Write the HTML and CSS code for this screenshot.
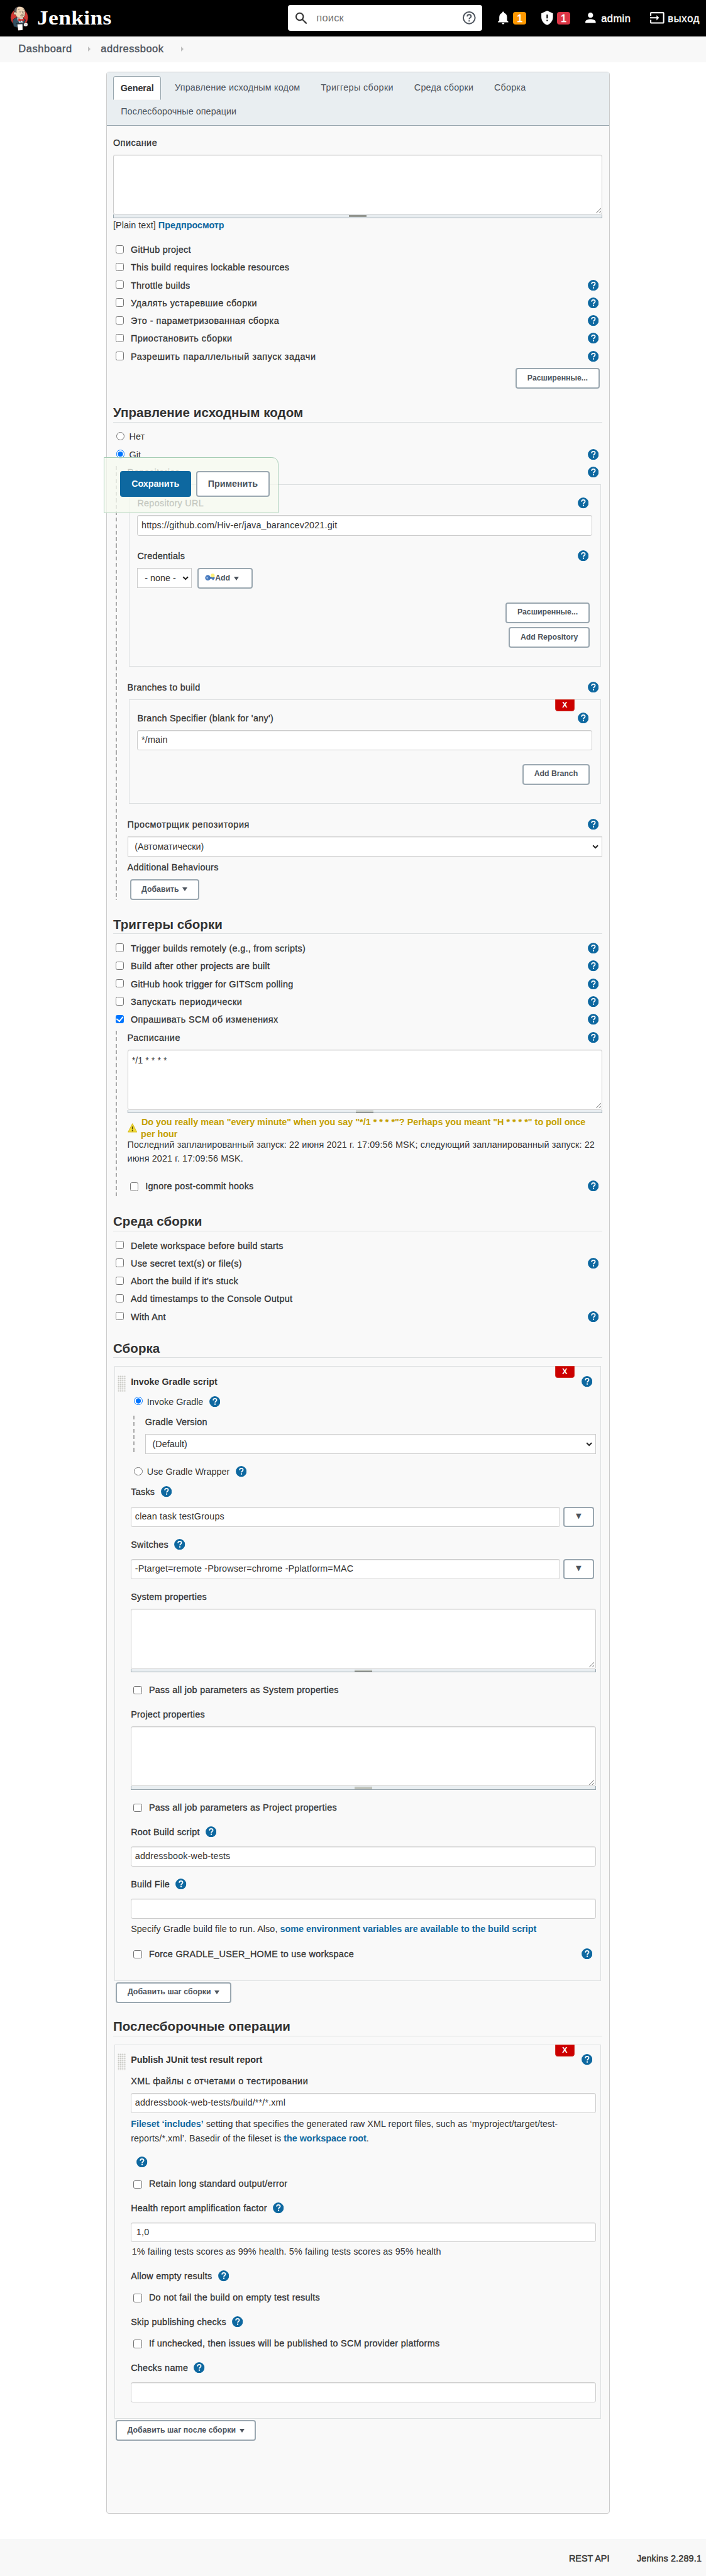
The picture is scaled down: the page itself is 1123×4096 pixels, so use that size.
FILE: index.html
```html
<!DOCTYPE html>
<html lang="ru">
<head>
<meta charset="utf-8">
<title>addressbook Config [Jenkins]</title>
<link rel="stylesheet" href="styles.css">
</head>
<body>
<svg class="defs" width="0" height="0" aria-hidden="true">
  <symbol id="help" viewBox="0 0 17 17"><circle cx="8.5" cy="8.5" r="8.4" fill="#0e68a0"/><path d="M5.9 6.4c.1-1.7 1.2-2.6 2.7-2.6 1.6 0 2.7.9 2.7 2.3 0 1.9-2.5 1.9-2.5 3.9" fill="none" stroke="#fff" stroke-width="1.7"/><rect x="7.8" y="11.3" width="2" height="2" fill="#fff"/></symbol>
  <symbol id="chev" viewBox="0 0 10 7"><path d="M1.2 1.2 5 5l3.800-3.800" fill="none" stroke="#222" stroke-width="2"/></symbol>
  <symbol id="grip" viewBox="0 0 8 8"><path d="M0 8 8 0M4.500 8 8 4.500" fill="none" stroke="#555" stroke-width=".8"/></symbol>
</svg>

<header class="top">
  <a class="logo">
    <svg class="butler" viewBox="94 50 174 232">
      <ellipse cx="180" cy="160" rx="81" ry="84" fill="#d33833" stroke="#2a1a18" stroke-width="3"/>
      <path d="M150 160 122 178c-4 22 0 44 8 66l32 8 56-10 20-60-22-18z" fill="#335061" stroke="#1d1919" stroke-width="4"/>
      <path d="M160 152l52 8 2 44-8 10-26-6-16-24z" fill="#fff"/>
      <path d="M172 180l14 24 20 6 10-22-14-10z" fill="#6d9ab5"/>
      <path d="M198 186l-4 8 8 16 8-14-4-10z" fill="#fff" stroke="#1d1919" stroke-width="2"/>
      <path d="M138 86c4-14 20-28 46-28 34 0 48 24 50 48 1 26-2 46-18 56-14 8-40 4-52-4-14-8-16-18-18-24-12 2-20-6-18-16 1-10 12-12 14-8z" fill="#f0d6b7" stroke="#2a1a18" stroke-width="3"/>
      <path d="M134 108c-6-26 12-44 30-47-8 8-10 14-10 22-2 10-4 20-2 34-4-8-8-12-18-9z" fill="#666469" stroke="#1d1919" stroke-width="3"/>
      <path d="M168 90c4-8 12-10 16-6M214 86c4-4 8-2 10 2M180 106c4 4 12 4 16-2M216 108c4 2 8 0 10-4M206 100c0 14 8 18 10 24-2 6-10 6-16 4M188 142c12 8 26 8 32 0M194 136c10 4 20 4 26 0" fill="none" stroke="#1d1919" stroke-width="3"/>
      <path d="M174 168l22 10v10l-22 8c-4-8-4-20 0-28zM222 168l-18 10v8l18 8c3-8 3-18 0-26z" fill="#e62a24" stroke="#5a1010" stroke-width="2"/>
      <rect x="194" y="174" width="12" height="14" rx="3" fill="#d33833"/>
      <path d="M160 222l48-2 2 56-40 4z" fill="#fff" stroke="#2a1a18" stroke-width="2"/>
      <path d="M150 216l70-2v26l-10 4-2-24-50 2z" fill="#335061" stroke="#1d1919" stroke-width="3"/>
      <path d="M222 216c10-8 28-10 34-2 4 8 2 22-4 26-10 4-22 2-30-2z" fill="#fff" stroke="#2a1a18" stroke-width="3"/>
      <path d="M236 222l12-2M236 230h12M211 252h7v12h-7" fill="none" stroke="#1d1919" stroke-width="2"/>
      <path d="M164 224l44-2 1 52-36 3z" fill="#fff"/>
    </svg>
    <span class="brand">Jenkins</span>
  </a>
  <div class="search">
    <svg width="20" height="20" viewBox="0 0 20 20"><circle cx="7.500" cy="7.300" r="5.600" fill="none" stroke="#333" stroke-width="2"/><path d="M11.800 11.600l6.400 6.400" stroke="#333" stroke-width="2.200"/></svg>
    <span>поиск</span>
    <svg width="22" height="22" viewBox="0 0 22 22" fill="none" stroke="#4d545d" stroke-width="1.900"><circle cx="11" cy="11" r="9.100"/><path d="M8 9c0-1.900 1.300-3 3-3s3 1.100 3 2.800c0 2.100-3 2.300-3 4.400M11 14.800v2"/></svg>
  </div>
  <svg class="ic" viewBox="0 0 24 24"><path d="M12 22c1.100 0 2-.9 2-2h-4c0 1.100.9 2 2 2zm6-6v-5c0-3.070-1.630-5.640-4.500-6.320V4c0-.83-.67-1.500-1.500-1.500s-1.500.67-1.500 1.500v.68C7.640 5.360 6 7.920 6 11v5l-2 2v1h16v-1l-2-2z"/></svg>
  <span class="badge orange">1</span>
  <svg class="ic shield" viewBox="0 0 24 24"><path d="M12 1 3 5v6c0 5.550 3.840 10.740 9 12 5.160-1.260 9-6.450 9-12V5l-9-4zm1 16h-2v-2h2v2zm0-4h-2V7h2v6z"/></svg>
  <span class="badge red">1</span>
  <svg class="ic person" viewBox="0 0 24 24"><path d="M12 12c2.210 0 4-1.790 4-4s-1.790-4-4-4-4 1.790-4 4 1.790 4 4 4zm0 2c-2.670 0-8 1.340-8 4v2h16v-2c0-2.660-5.330-4-8-4z"/></svg>
  <span class="toplink">admin</span>
  <svg class="ic exit" viewBox="0 0 24 24"><path d="M21 3.010H3c-1.100 0-2 .9-2 2V9h2V4.990h18v14.030H3V15H1v4.010c0 1.100.9 1.980 2 1.980h18c1.100 0 2-.88 2-1.980v-14c0-1.110-.9-2-2-2zM11 16l4-4-4-4v3H1v2h10v3z"/></svg>
  <span class="toplink">выход</span>
</header>

<nav class="crumbs"><span class="w-dash">Dashboard</span><i></i><span class="w-addr">addressbook</span><i></i></nav>

<main class="panel">
  <div class="tabs">
    <a class="tab on">General</a><a class="tab">Управление исходным кодом</a><a class="tab wide">Триггеры сборки</a><a class="tab">Среда сборки</a><a class="tab">Сборка</a><a class="tab tight">Послесборочные операции</a>
  </div>

  <section class="general">
    <div class="label ru">Описание</div>
    <div class="area"><svg><use href="#grip"/></svg></div><div class="resize"><i></i></div>
    <p class="text plain">[Plain text] <b>Предпросмотр</b></p>
    <div class="row"><input type="checkbox"><span class="m">GitHub project</span></div>
    <div class="row"><input type="checkbox"><span class="m">This build requires lockable resources</span></div>
    <div class="row"><input type="checkbox"><span class="m">Throttle builds</span><svg class="q end"><use href="#help"/></svg></div>
    <div class="row"><input type="checkbox"><span class="m ru">Удалять устаревшие сборки</span><svg class="q end"><use href="#help"/></svg></div>
    <div class="row"><input type="checkbox"><span class="m ru">Это - параметризованная сборка</span><svg class="q end"><use href="#help"/></svg></div>
    <div class="row"><input type="checkbox"><span class="m ru">Приостановить сборки</span><svg class="q end"><use href="#help"/></svg></div>
    <div class="row"><input type="checkbox"><span class="m ru loose">Разрешить параллельный запуск задачи</span><svg class="q end"><use href="#help"/></svg></div>
    <div class="right"><a class="btn w130">Расширенные...</a></div>
  </section>

  <section class="scm">
    <h2>Управление исходным кодом</h2>
    <div class="row"><input type="radio" name="scm"><span>Нет</span></div>
    <div class="row"><input type="radio" name="scm" checked><span>Git</span><svg class="q end"><use href="#help"/></svg></div>
    <div class="nested">
      <div class="label">Repositories<svg class="q end"><use href="#help"/></svg></div>
      <div class="box repo">
        <div class="label">Repository URL<svg class="q end"><use href="#help"/></svg></div>
        <div class="field">https://github.com/Hiv-er/java_barancev2021.git</div>
        <div class="label gap22">Credentials<svg class="q end"><use href="#help"/></svg></div>
        <div class="creds">
          <div class="select small"><span>- none -</span><svg><use href="#chev"/></svg></div>
          <a class="btn add"><svg viewBox="0 0 16 14" width="16" height="14"><circle cx="4.500" cy="6.500" r="4.200" fill="#4a7cbf"/><path d="M7 5h8v3h-1.500v2h-2V8H7z" fill="#3a6db3"/><circle cx="12" cy="3" r="3" fill="#fdf07a"/><circle cx="3.500" cy="6.500" r="1.200" fill="#a9c6ea"/></svg>Add<i class="tri"></i></a>
        </div>
        <div class="right gap21"><a class="btn w130">Расширенные...</a></div>
        <div class="right gap6"><a class="btn w125">Add Repository</a></div>
      </div>
      <div class="label gap22">Branches to build<svg class="q end"><use href="#help"/></svg></div>
      <div class="box branch">
        <span class="del">X</span>
        <div class="label">Branch Specifier (blank for 'any')<svg class="q end"><use href="#help"/></svg></div>
        <div class="field">*/main</div>
        <div class="right gap21"><a class="btn w104">Add Branch</a></div>
      </div>
      <div class="label ru loose gap22">Просмотрщик репозитория<svg class="q end"><use href="#help"/></svg></div>
      <div class="select"><span>(Автоматически)</span><svg><use href="#chev"/></svg></div>
      <div class="label gap6">Additional Behaviours</div>
      <a class="btn left w107">Добавить<i class="tri"></i></a>
    </div>
    <div class="savebar"><a class="big primary">Сохранить</a><a class="big">Применить</a></div>
  </section>

  <section class="triggers">
    <h2>Триггеры сборки</h2>
    <div class="row"><input type="checkbox"><span class="m">Trigger builds remotely (e.g., from scripts)</span><svg class="q end"><use href="#help"/></svg></div>
    <div class="row"><input type="checkbox"><span class="m">Build after other projects are built</span><svg class="q end"><use href="#help"/></svg></div>
    <div class="row"><input type="checkbox"><span class="m">GitHub hook trigger for GITScm polling</span><svg class="q end"><use href="#help"/></svg></div>
    <div class="row"><input type="checkbox"><span class="m ru loose">Запускать периодически</span><svg class="q end"><use href="#help"/></svg></div>
    <div class="row"><input type="checkbox" checked><span class="m mix">Опрашивать SCM об изменениях</span><svg class="q end"><use href="#help"/></svg></div>
    <div class="nested">
      <div class="label ru">Расписание<svg class="q end"><use href="#help"/></svg></div>
      <div class="area">*/1 * * * *<svg><use href="#grip"/></svg></div><div class="resize"><i></i></div>
      <div class="warn">
        <svg viewBox="0 0 15 15" width="15" height="15"><path d="M7.500.8 14.200 13.600H.8z" fill="#f3dd3a" stroke="#d9bd20" stroke-width="1" stroke-linejoin="round"/><path d="M7.500 5v4.600M7.500 10.600v1.700" stroke="#5b4b00" stroke-width="1.800"/></svg>
        <p><span>Do you really mean "every minute" when you say "*/1 * * * *"? Perhaps you meant "H * * * *" to poll once</span><br>per hour</p>
      </div>
      <p class="text sched">Последний запланированный запуск: 22 июня 2021 г. 17:09:56 MSK; следующий запланированный запуск: 22<br>июня 2021 г. 17:09:56 MSK.</p>
      <div class="row low ignore"><input type="checkbox"><span class="m">Ignore post-commit hooks</span><svg class="q end"><use href="#help"/></svg></div>
    </div>
  </section>

  <section class="env">
    <h2>Среда сборки</h2>
    <div class="row"><input type="checkbox"><span class="m">Delete workspace before build starts</span></div>
    <div class="row"><input type="checkbox"><span class="m">Use secret text(s) or file(s)</span><svg class="q end"><use href="#help"/></svg></div>
    <div class="row"><input type="checkbox"><span class="m">Abort the build if it's stuck</span></div>
    <div class="row"><input type="checkbox"><span class="m">Add timestamps to the Console Output</span></div>
    <div class="row"><input type="checkbox"><span class="m">With Ant</span><svg class="q end"><use href="#help"/></svg></div>
  </section>

  <section class="build">
    <h2>Сборка</h2>
    <div class="box step gradle">
      <span class="del">X</span><span class="handle"></span>
      <div class="label title">Invoke Gradle script<svg class="q end"><use href="#help"/></svg></div>
      <div class="row r31"><input type="radio" name="gr" checked><span>Invoke Gradle</span><svg class="q"><use href="#help"/></svg></div>
      <div class="nested">
        <div class="label">Gradle Version</div>
        <div class="select"><span>(Default)</span><svg><use href="#chev"/></svg></div>
      </div>
      <div class="row r31"><input type="radio" name="gr"><span>Use Gradle Wrapper</span><svg class="q"><use href="#help"/></svg></div>
      <div class="label tall">Tasks<svg class="q"><use href="#help"/></svg></div>
      <div class="pair"><div class="field">clean task testGroups</div><a class="drop">▼</a></div>
      <div class="label tall gap17">Switches<svg class="q"><use href="#help"/></svg></div>
      <div class="pair"><div class="field">-Ptarget=remote -Pbrowser=chrome -Pplatform=MAC</div><a class="drop">▼</a></div>
      <div class="label gap17">System properties</div>
      <div class="area"><svg><use href="#grip"/></svg></div><div class="resize"><i></i></div>
      <div class="row low gap17"><input type="checkbox"><span class="m">Pass all job parameters as System properties</span></div>
      <div class="label">Project properties</div>
      <div class="area"><svg><use href="#grip"/></svg></div><div class="resize"><i></i></div>
      <div class="row low gap17"><input type="checkbox"><span class="m">Pass all job parameters as Project properties</span></div>
      <div class="label tall">Root Build script<svg class="q"><use href="#help"/></svg></div>
      <div class="field">addressbook-web-tests</div>
      <div class="label tall gap17">Build File<svg class="q"><use href="#help"/></svg></div>
      <div class="field"></div>
      <p class="text spec">Specify Gradle build file to run. Also, <b>some environment variables are available to the build script</b></p>
      <div class="row low gap17"><input type="checkbox"><span class="m">Force GRADLE_USER_HOME to use workspace</span><svg class="q end"><use href="#help"/></svg></div>
    </div>
    <a class="btn left w179">Добавить шаг сборки<i class="tri"></i></a>
  </section>

  <section class="post">
    <h2>Послесборочные операции</h2>
    <div class="box step junit">
      <span class="del">X</span><span class="handle"></span>
      <div class="label title">Publish JUnit test result report<svg class="q end"><use href="#help"/></svg></div>
      <div class="label ru">XML файлы с отчетами о тестировании</div>
      <div class="field">addressbook-web-tests/build/**/*.xml</div>
      <p class="text files"><b>Fileset ‘includes’</b> setting that specifies the generated raw XML report files, such as ‘myproject/target/test-<br>reports/*.xml’. Basedir of the fileset is <b>the workspace root</b>.</p>
      <div class="row lone"><svg class="q"><use href="#help"/></svg></div>
      <div class="row low"><input type="checkbox"><span class="m">Retain long standard output/error</span></div>
      <div class="label tall">Health report amplification factor<svg class="q"><use href="#help"/></svg></div>
      <div class="field num">1,0</div>
      <p class="text fail">1% failing tests scores as 99% health. 5% failing tests scores as 95% health</p>
      <div class="label r33">Allow empty results<svg class="q"><use href="#help"/></svg></div>
      <div class="row low"><input type="checkbox"><span class="m">Do not fail the build on empty test results</span></div>
      <div class="label r33">Skip publishing checks<svg class="q"><use href="#help"/></svg></div>
      <div class="row low"><input type="checkbox"><span class="m">If unchecked, then issues will be published to SCM provider platforms</span></div>
      <div class="label tall">Checks name<svg class="q"><use href="#help"/></svg></div>
      <div class="field"></div>
    </div>
    <a class="btn left w217">Добавить шаг после сборки<i class="tri"></i></a>
  </section>
</main>

<footer><span class="w-rest">REST API</span><span class="w-ver">Jenkins 2.289.1</span></footer>
</body>
</html>
```
FILE: styles.css
```css
html { zoom: 1.0283; background: #fff; overflow: hidden; }
* { box-sizing: border-box; }
body {
  margin: 0; width: 1092px; height: 3983px;
  display: flex; flex-direction: column;
  font: 14px/21px "Liberation Sans", Arial, sans-serif; color: #333;
}
p, h2 { margin: 0; }
svg { display: block; flex: none; }
.defs { position: absolute; }

/* header */
.top { flex: none; height: 56px; background: #000; display: flex; align-items: center; color: #fff; }
.logo { display: flex; width: 445.500px; padding-left: 15.500px; align-items: center; }
.butler { width: 29px; height: 38.700px; }
.brand { margin-left: 12.500px; font: bold 30px/40px "Liberation Serif", serif; letter-spacing: .3px; padding-top: 1px; transform: scaleX(1.15); transform-origin: left; }
.search { width: 300.500px; height: 40px; border-radius: 4px; background: #fff; display: flex; align-items: center; padding: 0 9px 0 11px; font-size: 16px; color: #757575; margin-right: 20px; }
.search span { flex: 1; margin-left: 13px; padding-top: 1px; letter-spacing: .2px; }
.ic { width: 24px; height: 24px; fill: #fff; }
.badge { width: 20px; height: 20px; border-radius: 4px; margin-left: 4px; font-size: 16px; line-height: 21px; text-align: center; -webkit-text-stroke: .5px #fff; }
.orange { background: #ff9800; }
.red { background: #dc3545; }
.shield, .person { margin-left: 20px; }
.toplink { width: 46px; margin-left: 4px; font-size: 16px; white-space: nowrap; -webkit-text-stroke: .4px #fff; padding-top: 1px; letter-spacing: .45px; }
.exit { margin-left: 29px; }
.exit + .toplink { letter-spacing: .8px; }

.crumbs { flex: none; height: 40px; background: #f8f8f8; display: flex; align-items: center; padding-left: 28.500px; font-size: 16px; color: #4d545d; -webkit-text-stroke: .4px #4d545d; }
.crumbs span { padding-bottom: 1px; }
.crumbs i { border-left: 4px solid #bfbfbf; border-top: 4px solid transparent; border-bottom: 4px solid transparent; margin: 0 16px 0 25px; }
.w-dash, .w-addr { white-space: nowrap; letter-spacing: .55px; }
.w-dash { width: 82.500px; }
.w-addr { width: 99px; }

/* configuration panel */
.panel { flex: none; margin: 15px 0 0 164px; width: 779px; height: 3776px; border: 1px solid #ccc; border-radius: 4px; background: #f9f9f9; }
.tabs { height: 82.500px; padding: 6px 10px 0; background: #e9eef1; border-bottom: 1px solid #98a6ae; display: flex; flex-wrap: wrap; align-content: flex-start; }
.tab { height: 37px; line-height: 35px; padding: 0 11px; margin-right: 8px; color: #4d545d; border: 1px solid transparent; white-space: nowrap; letter-spacing: .18px; }
.tab.wide { letter-spacing: .36px; }
.tab.tight { letter-spacing: .05px; }
.tab.on { background: #fff; border-color: #98a6ae; border-bottom-color: #f9f9f9; border-radius: 4px 4px 0 0; color: #333; font-weight: bold; padding: 0 10.500px; margin-right: 9px; line-height: 36px; letter-spacing: -.08px; }
section { margin: 0 10.500px 0 10px; position: relative; }
.general { height: 431.800px; padding-top: 16.150px; }
.scm { height: 791.200px; }
.triggers { height: 459.600px; }
.env { height: 196px; }
.build { height: 1049px; }

h2 { font-size: 20px; line-height: 24px; height: 27px; border-bottom: 1px solid #dcdfe0; margin-bottom: 12.400px; letter-spacing: .06px; }
b { color: #0e68a0; letter-spacing: -.02px; }
.label, .m { -webkit-text-stroke: .3px #333; white-space: nowrap; letter-spacing: .28px; }
.ru { letter-spacing: .5px; }
.ru.loose { letter-spacing: .6px; }
.mix { letter-spacing: .39px; }
.label { height: 28.350px; display: flex; align-items: flex-start; }
.label.tall { height: 32.350px; }
.label.r33 { height: 33px; }
.label.title { height: 31px; font-weight: bold; -webkit-text-stroke: 0; letter-spacing: -.03px; }
.q { width: 17px; height: 17px; margin: 1px 0 0 9px; }
.q.end { margin: .9px 5.500px 0 auto; }
.row { height: 27.500px; display: flex; align-items: flex-start; }
.row.r31 { height: 31.200px; padding-left: 1px; }
.row.low { height: 37.900px; }
input { appearance: none; flex: none; width: 13px; height: 13px; margin: 2.350px 10.300px 0 4px; border: 1px solid #767676; border-radius: 2.500px; background: #fff; }
.low input { margin: 4.300px 11px 0 4px; }
input[type=radio] { border-radius: 50%; margin: 2.350px 7px 0 5px; }
.r31 input[type=radio] { margin-left: 4px; }
input[type=radio]:checked { border-color: #0075ff; background: radial-gradient(circle, #0075ff 0 3.700px, #fff 4.300px); }
input[type=checkbox]:checked { border-color: #0075ff; background: #0075ff; display: grid; place-items: center; }
input[type=checkbox]:checked::after { content: ""; width: 4.500px; height: 8px; border: solid #fff; border-width: 0 2px 2px 0; transform: rotate(40deg); margin-top: -2px; }

.field, .area, .select { background: #fff; border: 1px solid #ccc; border-radius: 3px; box-shadow: inset 0 1px 1px rgba(0,0,0,.075); }
.field { height: 31.400px; line-height: 29px; padding: .5px 5.500px 0; white-space: nowrap; letter-spacing: .14px; }
.field.num { height: 30.200px; padding: 0 7.500px; }
.area { height: 93px; padding: 6px 6px; display: flex; justify-content: space-between; }
.area svg { width: 8px; height: 8px; align-self: flex-end; margin: 0 -5px -5px auto; }
.resize { height: 5.300px; background: #e9eef1; border: 1px solid #98a6ae; border-top: 0; display: flex; justify-content: center; padding-top: 1px; }
.resize i { width: 27px; height: 3px; background: linear-gradient(#888a85 33%, #d3d7cf 33% 66%, #888a85 66%); }
.select { height: 31.500px; border-radius: 0; display: flex; justify-content: space-between; align-items: center; padding: 0 4px 0 10.500px; }
.select span { padding-top: 2px; }
.select svg { width: 10px; height: 7px; margin-top: 1px; }
.select.small { width: 84.500px; height: 31px; }

.text { line-height: 21px; white-space: nowrap; letter-spacing: .06px; }
.plain { margin: 1.700px 0 16.600px; }
.right { display: flex; justify-content: flex-end; padding-right: 4px; }
.btn { display: flex; align-items: center; justify-content: center; height: 32px; border: 2px solid #9aa7b0; border-radius: 4px; background: #fff; color: #4d545d; font-size: 12px; font-weight: bold; white-space: nowrap; letter-spacing: -.03px; }
.btn.left { margin-left: 4px; }
.w130 { width: 130px; }
.w125 { width: 125px; }
.w104 { width: 104px; }
.w107 { width: 107px; }
.w179 { width: 179px; }
.w217 { width: 217px; }
.w179, .w217 { letter-spacing: .04px; }
.tri { border-top: 6px solid #4d545d; border-left: 4px solid transparent; border-right: 4px solid transparent; margin-left: 5.500px; }
.gap6 { margin-top: 6.300px; }
.gap17 { margin-top: 17.200px; }
.gap21 { margin-top: 21px; }
.gap22 { margin-top: 21.900px; }

/* dependent settings with a dashed guide line */
.nested { position: relative; margin-left: 4px; padding-left: 18px; }
.nested::before { content: ""; position: absolute; left: 0; top: 0; bottom: 0; width: 2px; background: repeating-linear-gradient(#aaa 0 6px, transparent 6px 10px); }
.scm > .nested { height: 671.400px; }
.triggers > .nested { height: 257.500px; padding-top: .5px; }
.gradle > .nested { height: 61px; margin-bottom: 16.500px; }

.box { position: relative; border: 1px solid #dcdfe0; margin: 0 2px; padding: 18.500px 12.500px 0; }
.repo { height: 282px; }
.branch { height: 162px; }
.step { padding: 13.200px 7px 0 24.500px; margin-bottom: 2px; }
.gradle { height: 950.600px; }
.junit { height: 579px; }
.junit .title { height: 32.400px; }
.del { position: absolute; top: -1px; right: 40px; width: 30px; height: 18.500px; border: 1px solid #d0342a; border-radius: 0 0 4px 4px; background: #c00; color: #fff; font: bold 12px/16px "Liberation Sans", sans-serif; text-align: center; }
.handle { position: absolute; left: 4px; top: 13px; width: 13px; height: 26px; background: radial-gradient(circle, #c9c9c4 0 1px, transparent 1.400px) 0 0 / 3.200px 3.200px; }
.creds { display: flex; gap: 8px; }
.btn.add { width: 86px; justify-content: flex-start; padding-left: 10px; }
.pair { display: flex; gap: 4px; }
.pair .field { width: 664.500px; }
.drop { width: 48px; height: 31.400px; border: 2px solid #9aa7b0; border-radius: 4px; background: #fff; color: #4d545d; font: 11px/26px "DejaVu Sans", sans-serif; text-align: center; }
.warn { display: flex; gap: 6px; height: 34px; margin-top: 5px; color: #c4a000; font-weight: bold; line-height: 17.800px; white-space: nowrap; }
.warn svg { margin-top: 10.500px; }
.warn span { margin-left: .8px; }
.sched { margin-bottom: 22px; letter-spacing: .12px; }
.row.ignore { height: 27px; }
.spec { margin-top: 6px; }
.files { line-height: 22px; margin: 5.700px 0 16.200px; }
.row.lone { height: 33.300px; }
.fail { margin: 4.500px 0 17px; padding-left: 1.500px; letter-spacing: .1px; }

/* floating save bar lies over the form */
.savebar { position: absolute; left: -15px; top: 80.700px; width: 271px; height: 87px; padding: 20.500px 0 0 24.500px; display: flex; gap: 8px; background: rgba(245,249,239,.75); border: 1px solid #a6cdb5; border-radius: 0 10px 0 0; }
.big { width: 110px; height: 40px; border-radius: 4px; background: #fff; border: 2px solid #9aa7b0; color: #4d545d; font-weight: bold; line-height: 36px; text-align: center; letter-spacing: -.1px; }
.big + .big { width: 113.500px; }
.primary { background: #0e68a0; border-color: #0e68a0; color: #fff; }

footer { margin-top: auto; height: 56.500px; background: #f8f8f8; border-top: 1px solid #ebeeef; display: flex; justify-content: flex-end; gap: 41px; padding: 19px 6px 0 0; -webkit-text-stroke: .45px #333; white-space: nowrap; }
.w-rest { width: 64px; }
.w-ver { width: 101px; letter-spacing: .16px; }
```
